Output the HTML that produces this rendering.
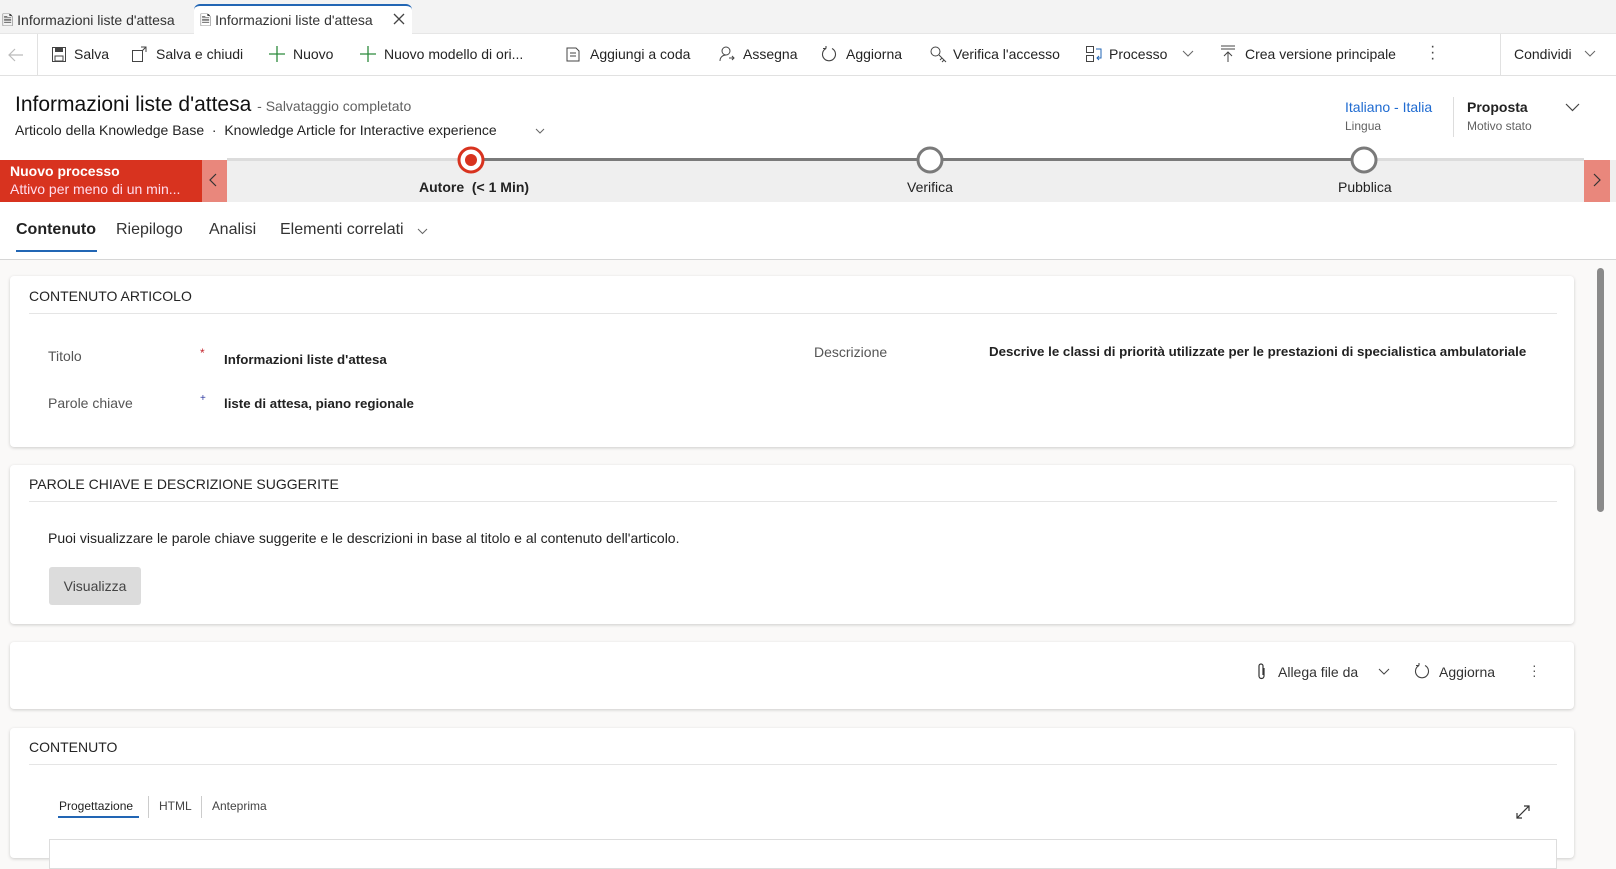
<!DOCTYPE html>
<html><head><meta charset="utf-8"><style>
*{box-sizing:border-box;margin:0;padding:0}
body{width:1616px;height:842px;overflow:hidden;background:#faf9f8;font-family:"Liberation Sans",sans-serif;color:#242424;position:relative}
.a{position:absolute;white-space:nowrap}
.t14{font-size:14px}
.b{font-size:13.3px;font-weight:bold;color:#222}
svg{position:absolute;overflow:visible}
.card{position:absolute;left:10px;width:1564px;background:#fff;border-radius:4px;box-shadow:0 1px 3px rgba(0,0,0,.18)}
.sep{position:absolute;left:19px;right:17px;height:1px;background:#e5e5e5}
.hd{position:absolute;left:19px;font-size:14px;color:#242424}
</style></head><body>
<div class="a" style="left:0;top:76px;width:1616px;height:84px;background:#fff"></div>
<!-- tab bar -->
<div class="a" style="left:0;top:0;width:1616px;height:34px;background:#f3f3f3;border-bottom:1px solid #e6e6e6"></div>
<div class="a" style="left:194px;top:4px;width:218px;height:31px;background:#fff;border-top:2px solid #2266b4;border-radius:6px 6px 0 0"></div>
<div class="a t14" style="left:2px;top:10px;color:#333">🗎&nbsp;Informazioni liste d'attesa</div>
<div class="a t14" style="left:200px;top:10px;color:#333">🗎&nbsp;Informazioni liste d'attesa</div>
<svg style="left:393px;top:13px" width="12" height="12"><path d="M1 1L11 11M11 1L1 11" stroke="#444" stroke-width="1.3"/></svg>
<!-- toolbar -->
<div class="a" style="left:0;top:34px;width:1616px;height:42px;background:#fff;border-bottom:1px solid #e1e1e1"></div>
<div class="a" style="left:37px;top:34px;width:1px;height:42px;background:#e1e1e1"></div>
<div class="a" style="left:1500px;top:34px;width:1px;height:42px;background:#e1e1e1"></div>
<svg style="left:8px;top:48px" width="16" height="14"><path d="M15 7H1M7 1L1 7L7 13" stroke="#bbb" fill="none" stroke-width="1.2"/></svg>
<svg style="left:52px;top:47px" width="14" height="15"><rect x=".5" y=".5" width="13" height="14" fill="none" stroke="#444"/><rect x="3" y="1" width="8" height="4" fill="#444"/><rect x="3" y="9" width="8" height="5" fill="none" stroke="#444"/></svg>
<div class="a t14" style="left:74px;top:46px">Salva</div>
<svg style="left:132px;top:46px" width="15" height="16"><rect x=".5" y="4.5" width="10" height="11" fill="none" stroke="#444"/><path d="M9 1h5v5M14 1l-4 4" stroke="#444" fill="none"/></svg>
<div class="a t14" style="left:156px;top:46px">Salva e chiudi</div>
<svg style="left:269px;top:46px" width="16" height="16"><path d="M8 0V16M0 8H16" stroke="#2c8a3c" stroke-width="1.3"/></svg>
<div class="a t14" style="left:293px;top:46px">Nuovo</div>
<svg style="left:360px;top:46px" width="16" height="16"><path d="M8 0V16M0 8H16" stroke="#2c8a3c" stroke-width="1.3"/></svg>
<div class="a t14" style="left:384px;top:46px">Nuovo modello di ori...</div>
<svg style="left:566px;top:47px" width="14" height="15"><path d="M1 14V1h9l3 3v10zM4 6h6M4 9h6" stroke="#444" fill="none"/></svg>
<div class="a t14" style="left:590px;top:46px">Aggiungi a coda</div>
<svg style="left:719px;top:46px" width="16" height="16"><circle cx="7" cy="5" r="4" fill="none" stroke="#444"/><path d="M1 15c0-4 3-6 6-6M10 12h5M13 10l2 2-2 2" stroke="#444" fill="none"/></svg>
<div class="a t14" style="left:743px;top:46px">Assegna</div>
<svg style="left:821px;top:46px" width="16" height="16"><path d="M11 2.5A6.5 6.5 0 1 1 5 2.5M5 2.5V0M5 2.5H2" stroke="#444" fill="none" stroke-width="1.1"/></svg>
<div class="a t14" style="left:846px;top:46px">Aggiorna</div>
<svg style="left:930px;top:46px" width="17" height="17"><circle cx="5.5" cy="5.5" r="4.5" fill="none" stroke="#444"/><path d="M9 9l7 7M12 12l-2 2M14 14l-2 2" stroke="#444" fill="none"/></svg>
<div class="a t14" style="left:953px;top:46px">Verifica l'accesso</div>
<svg style="left:1086px;top:46px" width="17" height="16"><rect x=".5" y=".5" width="7" height="6" fill="none" stroke="#444"/><rect x=".5" y="9.5" width="7" height="6" fill="none" stroke="#444"/><path d="M10 3h5v9h-4M13 10l-2 2 2 2" stroke="#2266b4" fill="none"/></svg>
<div class="a t14" style="left:1109px;top:46px">Processo</div>
<svg style="left:1182px;top:50px" width="12" height="7"><path d="M1 1l5 5 5-5" stroke="#666" fill="none"/></svg>
<svg style="left:1221px;top:45px" width="14" height="17"><path d="M0 1H14M0 4H14M7 17V7M3 11l4-4 4 4" stroke="#444" fill="none"/></svg>
<div class="a t14" style="left:1245px;top:46px">Crea versione principale</div>
<div class="a" style="left:1430px;top:44px;font-size:16px;line-height:6px;color:#444">·<br>·<br>·</div>
<div class="a t14" style="left:1514px;top:46px">Condividi</div>
<svg style="left:1584px;top:50px" width="12" height="7"><path d="M1 1l5 5 5-5" stroke="#666" fill="none"/></svg>
<!-- header -->
<div class="a" style="left:15px;top:93px;font-size:21px;color:#111">Informazioni liste d'attesa <span style="font-size:14px;color:#616161">- Salvataggio completato</span></div>
<div class="a t14" style="left:15px;top:122px;color:#242424">Articolo della Knowledge Base &nbsp;·&nbsp; Knowledge Article for Interactive experience</div>
<svg style="left:535px;top:128px" width="10" height="6"><path d="M1 1l4 4 4-4" stroke="#666" fill="none"/></svg>
<div class="a t14" style="left:1345px;top:99px;color:#1f6bd1">Italiano - Italia</div>
<div class="a" style="left:1345px;top:119px;font-size:12px;color:#616161">Lingua</div>
<div class="a" style="left:1453px;top:97px;width:1px;height:40px;background:#ddd"></div>
<div class="a t14" style="left:1467px;top:99px;font-weight:bold;color:#222">Proposta</div>
<div class="a" style="left:1467px;top:119px;font-size:12px;color:#616161">Motivo stato</div>
<svg style="left:1565px;top:103px" width="15" height="9"><path d="M1 1l6.5 6.5L14 1" stroke="#444" fill="none" stroke-width="1.2"/></svg>
<!-- process bar -->
<div class="a" style="left:0;top:160px;width:1616px;height:42px;background:#efefef"></div>
<div class="a" style="left:0;top:160px;width:202px;height:42px;background:#d8331f"></div>
<div class="a" style="left:10px;top:163px;font-size:14px;font-weight:bold;color:#fff">Nuovo processo</div>
<div class="a" style="left:10px;top:181px;font-size:14px;color:#fde">Attivo per meno di un min...</div>
<div class="a" style="left:202px;top:160px;width:25px;height:42px;background:#e9877c"></div>
<svg style="left:209px;top:173px" width="8" height="14"><path d="M7 1L1 7l6 6" stroke="#333" fill="none" stroke-width="1.2"/></svg>
<div class="a" style="left:1584px;top:160px;width:26px;height:42px;background:#e9877c"></div>
<svg style="left:1593px;top:173px" width="8" height="14"><path d="M1 1l6 6-6 6" stroke="#333" fill="none" stroke-width="1.2"/></svg>
<div class="a" style="left:227px;top:158px;width:1357px;height:3px;background:#dcdcdc"></div>
<div class="a" style="left:471px;top:158px;width:893px;height:3px;background:#7a7a7a"></div>
<svg style="left:0;top:0" width="1" height="1">
<circle cx="471" cy="160" r="12" fill="#fff" stroke="#d8331f" stroke-width="3"/><circle cx="471" cy="160" r="6" fill="#d8331f"/>
<circle cx="930" cy="160" r="12" fill="#fff" stroke="#7a7a7a" stroke-width="3"/>
<circle cx="1364" cy="160" r="12" fill="#fff" stroke="#7a7a7a" stroke-width="3"/></svg>
<div class="a t14" style="left:419px;top:179px;font-weight:bold;color:#222">Autore&nbsp; (&lt; 1 Min)</div>
<div class="a t14" style="left:907px;top:179px;color:#222">Verifica</div>
<div class="a t14" style="left:1338px;top:179px;color:#222">Pubblica</div>
<!-- tabs -->
<div class="a" style="left:0;top:202px;width:1616px;height:58px;background:#fff;border-bottom:1px solid #d6d6d6"></div>
<div class="a" style="left:16px;top:221px;font-size:16px;font-weight:bold;color:#222">Contenuto</div>
<div class="a" style="left:16px;top:250px;width:81px;height:2px;background:#2266b4"></div>
<div class="a" style="left:116px;top:221px;font-size:16px;color:#333">Riepilogo</div>
<div class="a" style="left:209px;top:221px;font-size:16px;color:#333">Analisi</div>
<div class="a" style="left:280px;top:221px;font-size:16px;color:#333">Elementi correlati</div>
<svg style="left:417px;top:228px" width="11" height="6"><path d="M1 1l4.5 4.5L10 1" stroke="#666" fill="none"/></svg>
<!-- scrollbar -->
<div class="a" style="left:1597px;top:268px;width:7px;height:244px;background:#8a8a8a;border-radius:4px"></div>
<!-- card 1 -->
<div class="card" style="top:276px;height:171px">
<div class="hd" style="top:12px">CONTENUTO ARTICOLO</div><div class="sep" style="top:37px"></div>
<div class="a t14" style="left:38px;top:72px;color:#555">Titolo</div>
<div class="a" style="left:190px;top:70px;font-size:12px;color:#c4262e">*</div>
<div class="a b" style="left:214px;top:76px">Informazioni liste d'attesa</div>
<div class="a t14" style="left:38px;top:119px;color:#555">Parole chiave</div>
<div class="a" style="left:190px;top:117px;font-size:10px;color:#2e3aa0">+</div>
<div class="a b" style="left:214px;top:120px">liste di attesa, piano regionale</div>
<div class="a t14" style="left:804px;top:68px;color:#555">Descrizione</div>
<div class="a b" style="left:979px;top:68px">Descrive le classi di priorità utilizzate per le prestazioni di specialistica ambulatoriale</div>
</div>
<!-- card 2 -->
<div class="card" style="top:465px;height:159px">
<div class="hd" style="top:11px">PAROLE CHIAVE E DESCRIZIONE SUGGERITE</div><div class="sep" style="top:36px"></div>
<div class="a t14" style="left:38px;top:65px;color:#222">Puoi visualizzare le parole chiave suggerite e le descrizioni in base al titolo e al contenuto dell'articolo.</div>
<div class="a t14" style="left:39px;top:102px;width:92px;height:38px;background:#dcdcdc;border-radius:3px;color:#444;text-align:center;line-height:38px">Visualizza</div>
</div>
<!-- card 3 -->
<div class="card" style="top:642px;height:67px">
<svg style="left:1247px;top:21px" width="10" height="17"><path d="M7 5v8a2.5 2.5 0 0 1-5 0V3a2 2 0 0 1 4 0v9" stroke="#333" fill="none" stroke-width="1.2"/></svg>
<div class="a t14" style="left:1268px;top:22px;color:#333">Allega file da</div>
<svg style="left:1368px;top:26px" width="12" height="7"><path d="M1 1l5 5 5-5" stroke="#444" fill="none"/></svg>
<svg style="left:1404px;top:21px" width="16" height="16"><path d="M11 2.5A6.5 6.5 0 1 1 5 2.5M5 2.5V0M5 2.5H2" stroke="#444" fill="none" stroke-width="1.1"/></svg>
<div class="a t14" style="left:1429px;top:22px;color:#333">Aggiorna</div>
<div class="a" style="left:1522px;top:21px;font-size:14px;line-height:5px;color:#555">·<br>·<br>·</div>
</div>
<!-- card 4 -->
<div class="card" style="top:728px;height:130px">
<div class="hd" style="top:11px">CONTENUTO</div><div class="sep" style="top:36px"></div>
<div class="a" style="left:49px;top:71px;font-size:12px;color:#222">Progettazione</div>
<div class="a" style="left:48px;top:88px;width:81px;height:2px;background:#2266b4"></div>
<div class="a" style="left:138px;top:68px;width:1px;height:22px;background:#ccc"></div>
<div class="a" style="left:149px;top:71px;font-size:12px;color:#444">HTML</div>
<div class="a" style="left:191px;top:68px;width:1px;height:22px;background:#ccc"></div>
<div class="a" style="left:202px;top:71px;font-size:12px;color:#444">Anteprima</div>
<svg style="left:1506px;top:77px" width="14" height="14"><path d="M1 13L13 1M1 8v5h5M8 1h5v5" stroke="#333" fill="none" stroke-width="1.2"/></svg>
<div class="a" style="left:39px;top:111px;width:1508px;height:30px;border:1px solid #ddd;background:#fff"></div>
</div>
</body></html>
